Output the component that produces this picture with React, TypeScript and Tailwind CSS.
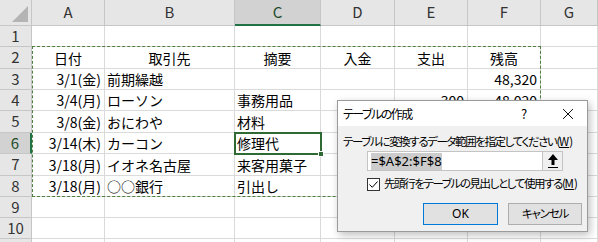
import React from "react";

const colW = [32, 73, 130, 86, 74, 73, 73];
const letters = ["A", "B", "C", "D", "E", "F", "G"];
const rowH = [21, 22, 21, 21, 22, 21, 22, 21, 21, 21, 21];

type Cell = { t: string; a: "l" | "r" | "c" };
const data: Cell[][] = [
  [],
  [
    { t: "日付", a: "c" },
    { t: "取引先", a: "c" },
    { t: "摘要", a: "c" },
    { t: "入金", a: "c" },
    { t: "支出", a: "c" },
    { t: "残高", a: "c" },
  ],
  [
    { t: "3/1(金)", a: "r" },
    { t: "前期繰越", a: "l" },
    { t: "", a: "l" },
    { t: "", a: "r" },
    { t: "", a: "r" },
    { t: "48,320", a: "r" },
  ],
  [
    { t: "3/4(月)", a: "r" },
    { t: "ローソン", a: "l" },
    { t: "事務用品", a: "l" },
    { t: "", a: "r" },
    { t: "300", a: "r" },
    { t: "48,020", a: "r" },
  ],
  [
    { t: "3/8(金)", a: "r" },
    { t: "おにわや", a: "l" },
    { t: "材料", a: "l" },
    { t: "", a: "r" },
    { t: "", a: "r" },
    { t: "", a: "r" },
  ],
  [
    { t: "3/14(木)", a: "r" },
    { t: "カーコン", a: "l" },
    { t: "修理代", a: "l" },
    { t: "", a: "r" },
    { t: "", a: "r" },
    { t: "", a: "r" },
  ],
  [
    { t: "3/18(月)", a: "r" },
    { t: "イオネ名古屋", a: "l" },
    { t: "来客用菓子", a: "l" },
    { t: "", a: "r" },
    { t: "", a: "r" },
    { t: "", a: "r" },
  ],
  [
    { t: "3/18(月)", a: "r" },
    { t: "○○銀行", a: "l" },
    { t: "引出し", a: "l" },
    { t: "", a: "r" },
    { t: "", a: "r" },
    { t: "", a: "r" },
  ],
  [],
  [],
  [],
];

const font = "[font-family:'Noto_Sans_CJK_JP','Noto_Sans',sans-serif]";

export default function App() {
  return (
    <div
      className={`relative w-[598px] h-[242px] overflow-hidden bg-white text-black ${font}`}
    >
      {/* column header row */}
      <div className="flex h-[26px]">
        <div className="relative w-[32px] shrink-0 bg-[#e6e6e6] border-r border-b border-[#c6c6c6]">
          <div className="absolute right-[3px] bottom-[3px] w-0 h-0 border-l-[16px] border-l-transparent border-b-[16px] border-b-[#b4b4b4]" />
        </div>
        {letters.map((l, i) => (
          <div
            key={l}
            style={{ width: i < 6 ? colW[i + 1] : undefined }}
            className={`${i < 6 ? "shrink-0" : "flex-1"} flex items-center justify-center text-[15px] ${
              l === "C"
                ? "bg-[#d2d2d2] border-r border-[#c6c6c6] border-b-2 border-b-[#217346] text-[#1e4d2b]"
                : "bg-[#e6e6e6] border-r border-b border-[#c6c6c6] text-[#333]"
            }`}
          >
            {l}
          </div>
        ))}
      </div>
      {rowH.map((h, r) => {
        const row = data[r] || [];
        const sel = r === 5;
        return (
          <div key={r} className="flex" style={{ height: h }}>
            <div
              className={`w-[32px] shrink-0 flex items-center justify-center text-[15px] ${
                sel
                  ? "bg-[#d2d2d2] border-b border-[#c6c6c6] border-r-2 border-r-[#217346] text-[#1e4d2b]"
                  : "bg-[#e6e6e6] border-r border-b border-[#c6c6c6] text-[#333]"
              }`}
            >
              {r < 10 ? r + 1 : ""}
            </div>
            {letters.map((l, i) => {
              const c = row[i];
              return (
                <div
                  key={l}
                  style={{ width: i < 6 ? colW[i + 1] : undefined }}
                  className={`${i < 6 ? "shrink-0" : "flex-1"} flex items-center whitespace-nowrap overflow-visible border-r border-b border-[#dadada] text-[14px] leading-none ${
                    c?.a === "r"
                      ? "justify-end pr-[3px]"
                      : c?.a === "c"
                      ? "justify-center"
                      : "justify-start pl-[2px]"
                  }`}
                >
                  {c?.t}
                </div>
              );
            })}
          </div>
        );
      })}

      {/* marching ants */}
      <div className="absolute left-[32px] top-[46px] w-[509px] h-[151px] border border-dashed border-[#4f7f3f] pointer-events-none" />

      {/* active cell C6 */}
      <div className="absolute left-[234px] top-[132px] w-[88px] h-[23px] border-2 border-[#2f6a35] pointer-events-none">
        <div className="absolute -right-[4px] -bottom-[4px] w-[6px] h-[6px] bg-[#2f6a35] border border-white" />
      </div>

      {/* dialog */}
      <div className="absolute left-[337px] top-[100px] w-[251px] h-[132px] bg-[#f0f0f0] border border-[#9a9a9a] shadow-[2px_3px_8px_rgba(0,0,0,0.25)] flex flex-col text-[12px] [font-feature-settings:'palt']">
        <div className="h-[25px] bg-white flex items-center pl-[5px] shrink-0">
          <span className="flex-1 tracking-[-1.5px]">テーブルの作成</span>
          <span className="w-[14px] text-center mr-[31px] text-[13px]">?</span>
          <svg width="12" height="12" viewBox="0 0 12 12" className="mr-[13px]">
            <path d="M1 1 L11 11 M11 1 L1 11" stroke="#111" strokeWidth="1" />
          </svg>
        </div>
        <div className="flex flex-col pl-[5px] pr-[5px]">
          <div className="mt-[7px] h-[16px] leading-[16px] whitespace-nowrap text-[11.5px] tracking-[-1.4px]">
            テーブルに変換するデータ範囲を指定してください(<span className="underline tracking-normal">W</span>)
          </div>
          <div className="mt-[2px] ml-[24px] w-[196px] h-[20px] bg-white border border-[#c4c4c4] flex items-stretch">
            <div className="flex-1 flex items-center pl-[3px]">
              <span className="bg-[#cccccc] text-[13px] leading-[17px] [font-family:'Noto_Sans','Liberation_Sans',sans-serif]">
                =$A$2:$F$8
              </span>
            </div>
            <div className="w-[20px] border-l border-[#c4c4c4] bg-[#f0f0f0] flex items-center justify-center">
              <svg width="12" height="16" viewBox="0 0 12 16">
                <path d="M6 1 L11 7 L7.5 7 L7.5 12 L4.5 12 L4.5 7 L1 7 Z" fill="#000" />
                <path d="M1 14.5 H11" stroke="#000" strokeWidth="1" />
              </svg>
            </div>
          </div>
          <div className="mt-[5px] ml-[24px] h-[16px] flex items-center whitespace-nowrap">
            <div className="w-[13px] h-[13px] border border-[#333] bg-white flex items-center justify-center mr-[4px] shrink-0">
              <svg width="11" height="11" viewBox="0 0 11 11">
                <path d="M1.5 5.5 L4.3 8.3 L9.5 2.5" stroke="#000" strokeWidth="1" fill="none" />
              </svg>
            </div>
            <span className="text-[11.5px] tracking-[-1.4px]">
              先頭行をテーブルの見出しとして使用する(<span className="underline tracking-normal">M</span>)
            </span>
          </div>
          <div className="mt-[11px] flex gap-[10px] pl-[80px]">
            <div className="w-[75px] h-[22px] bg-[#e1e1e1] border border-[#0078d7] flex items-center justify-center [font-family:'Noto_Sans','Liberation_Sans',sans-serif] text-[12px]">
              OK
            </div>
            <div className="w-[74px] h-[22px] bg-[#e1e1e1] border border-[#adadad] flex items-center justify-center text-[11.5px] tracking-[-1.2px]">
              キャンセル
            </div>
          </div>
        </div>
      </div>
    </div>
  );
}
